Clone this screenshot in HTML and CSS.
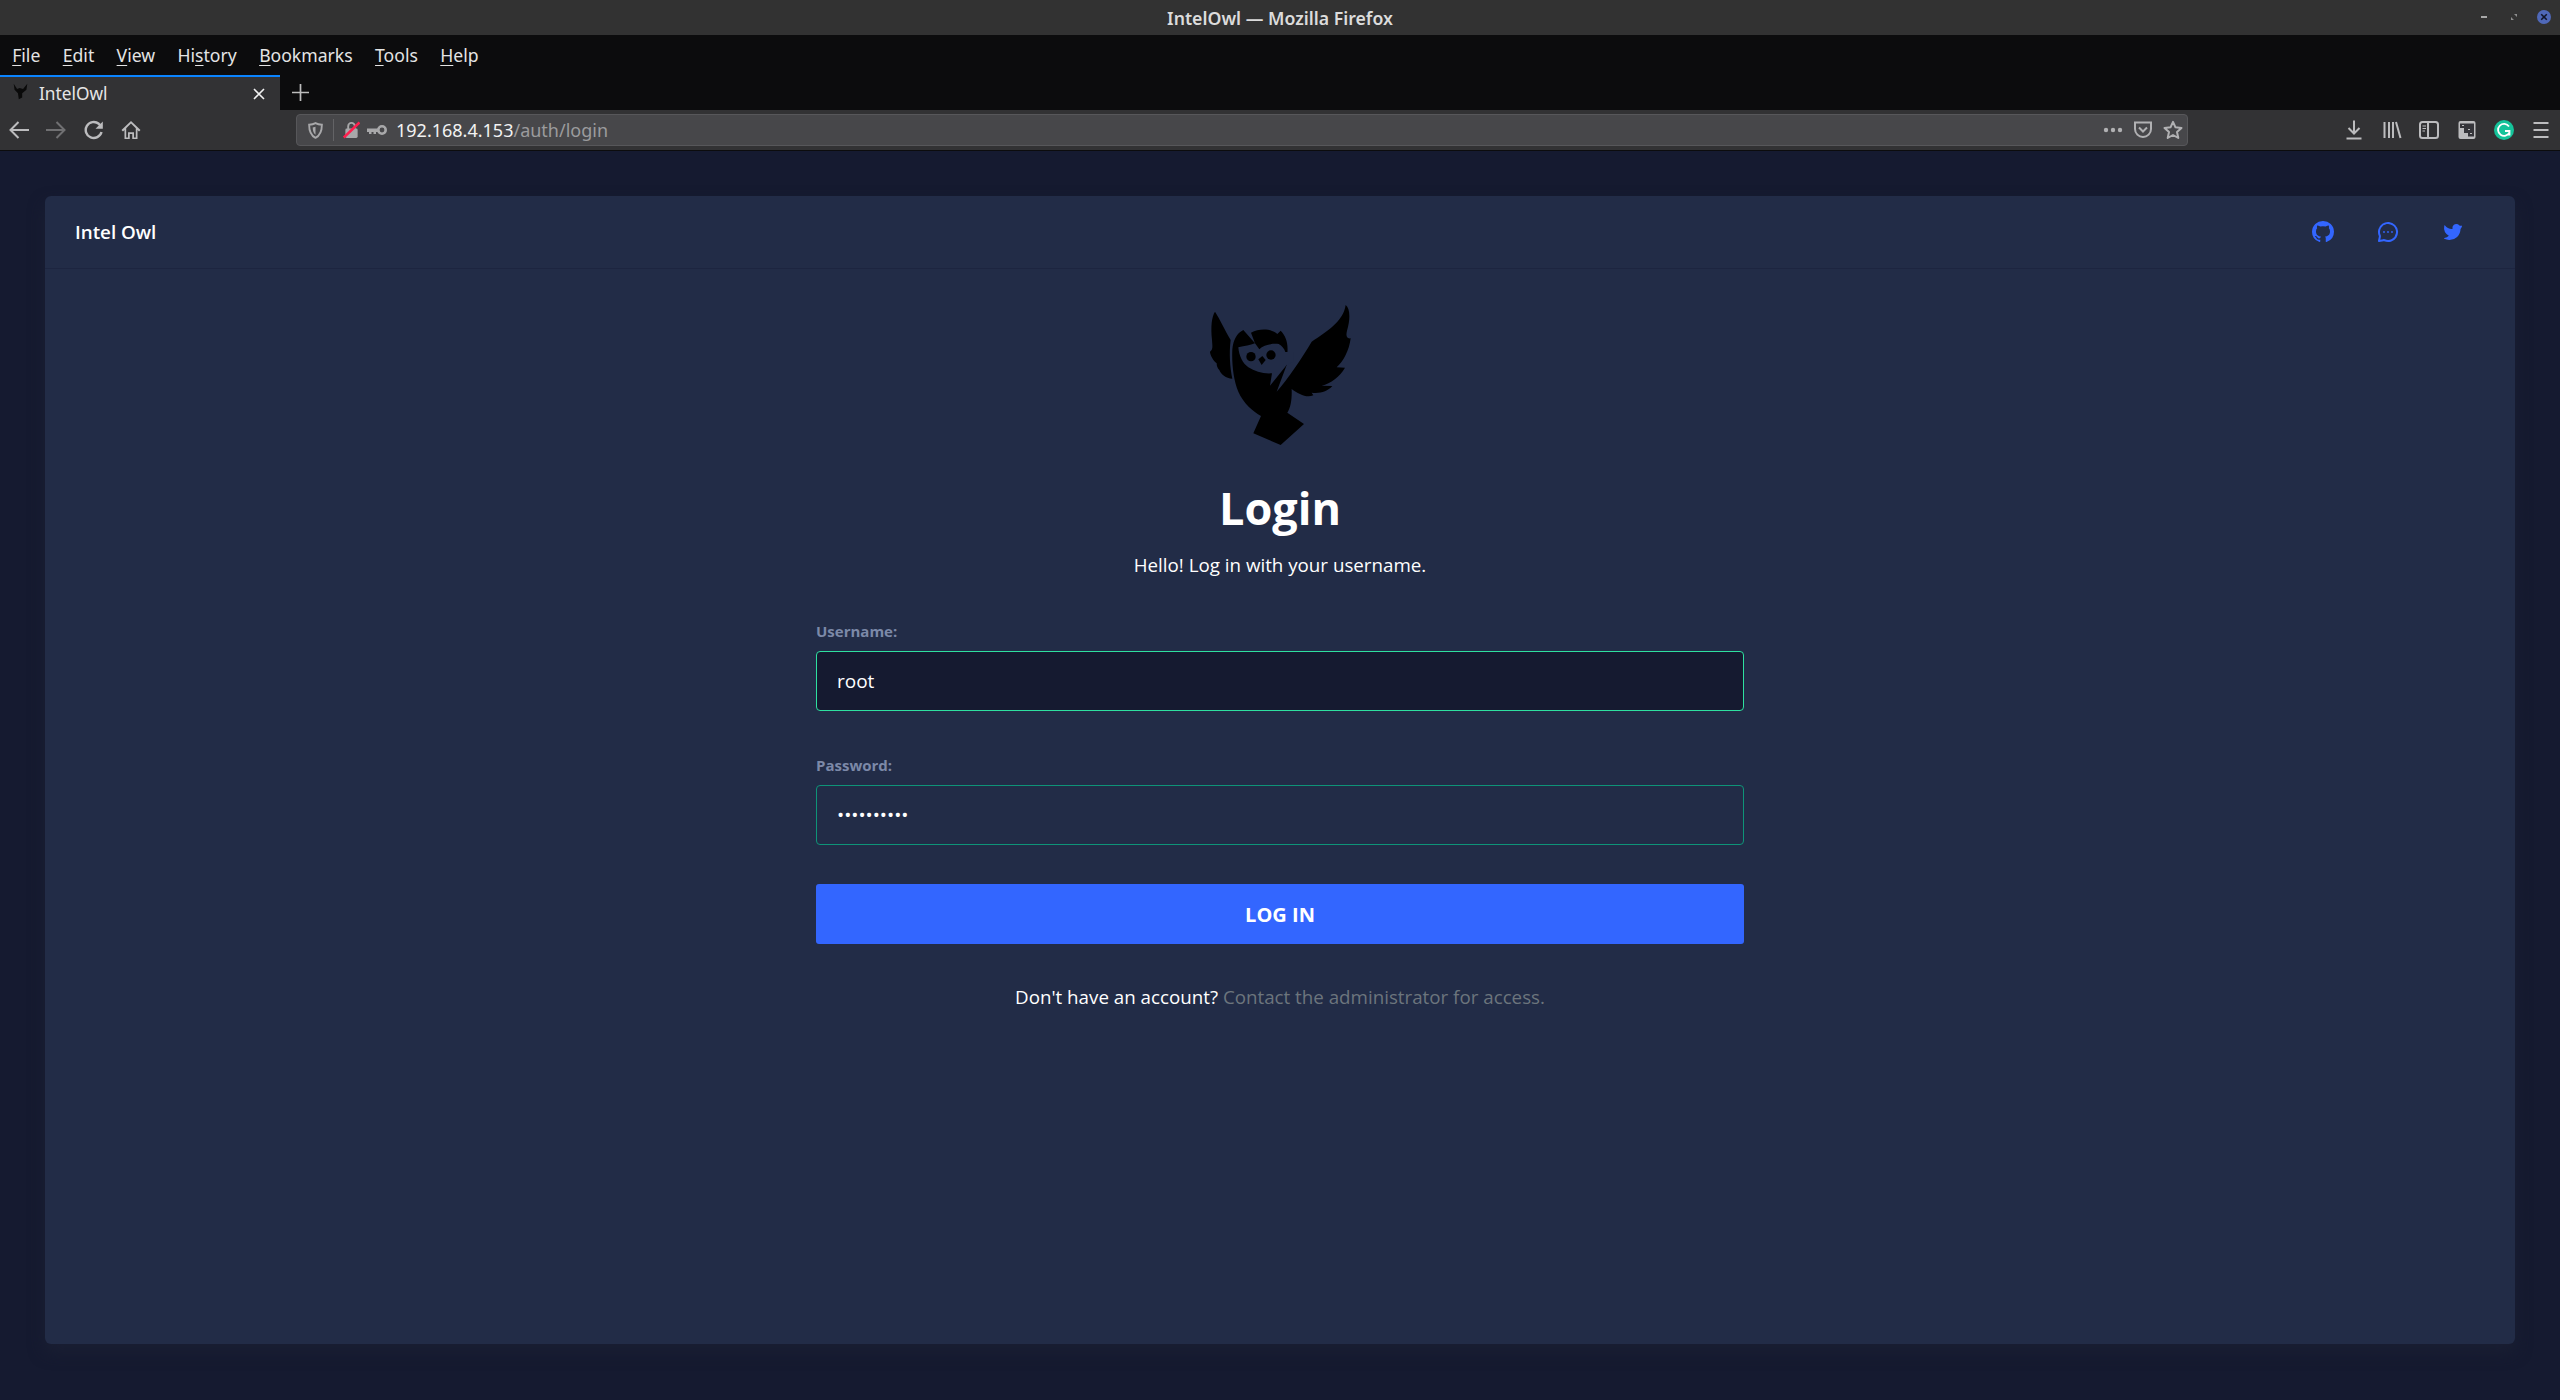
FILE: index.html
```html
<!DOCTYPE html>
<html lang="en">
<head>
<meta charset="utf-8">
<title>IntelOwl</title>
<link rel="stylesheet" href="styles.css">
</head>
<body>
<svg class="defs" width="0" height="0" aria-hidden="true">
  <defs>
    <symbol id="owl" viewBox="0 0 600 510">
      <path fill="#000" d="M105 65C95 80 92 110 96 150C97 168 100 178 90 185C90 195 100 212 110 220C110 228 112 234 118 240C122 252 138 266 157 266C150 230 147 190 152 150C135 120 118 85 105 65Z"/>
      <path fill="#000" d="M190 120C170 130 160 150 157 178C155 220 160 270 175 305C190 340 220 365 243 378L220 430L302 465L372 402L322 368C333 352 336 325 335 297C355 312 380 325 400 316L395 308C420 311 442 305 457 288L425 287C452 280 480 260 495 233L470 232C490 215 508 180 512 145C498 147 498 135 501 122C512 85 510 55 497 45C490 95 440 125 395 155C365 205 325 265 290 305L320 225L322 190C325 160 318 138 302 122L292 132C275 116 240 113 213 128L225 160Z"/>
      <path fill="#222c47" d="M175 172C195 168 210 165 225 160L238 178C250 165 275 160 296 162C306 168 313 176 316 186L340 186L340 215L320 225L270 287L276 250C250 252 225 245 205 232C188 220 177 198 175 172Z"/>
      <circle cx="213" cy="200" r="14" fill="#000"/>
      <circle cx="273" cy="195" r="14" fill="#000"/>
      <path fill="#000" d="M247 198L257 210L245 225L235 208Z"/>
    </symbol>
    <symbol id="favowl" viewBox="0 0 20 20">
      <path fill="#0a0a0a" d="M2 1L6 7L9 6L13 7L18 1L17 8L12 12L12 17L8 19L7 12L3 8Z"/>
    </symbol>
  </defs>
</svg>

<header class="titlebar">
  <span class="title-text">IntelOwl — Mozilla Firefox</span>
  <div class="wm">
    <span class="wm-min"></span>
    <svg class="wm-max" viewBox="0 0 8 8"><path d="M4 0H8V4ZM0 4L4 8H0Z"/></svg>
    <svg class="wm-close" viewBox="0 0 14 14"><circle cx="7" cy="7" r="7" fill="#4f68b8"/><path d="M4.200 4.200L9.800 9.800M9.800 4.200L4.200 9.800" stroke="#12162a" stroke-width="1.600"/></svg>
  </div>
</header>

<nav class="menubar">
  <span class="menu-item"><u>F</u>ile</span>
  <span class="menu-item"><u>E</u>dit</span>
  <span class="menu-item"><u>V</u>iew</span>
  <span class="menu-item">Hi<u>s</u>tory</span>
  <span class="menu-item"><u>B</u>ookmarks</span>
  <span class="menu-item"><u>T</u>ools</span>
  <span class="menu-item"><u>H</u>elp</span>
</nav>

<div class="tabstrip">
  <div class="tab">
    <svg class="tab-fav"><use href="#favowl"/></svg>
    <span class="tab-title">IntelOwl</span>
    <svg class="tab-close" viewBox="0 0 12 12"><path d="M1 1L11 11M11 1L1 11" stroke="#f2f2f2" stroke-width="1.600"/></svg>
  </div>
  <svg class="tab-new" viewBox="0 0 16 16"><path d="M8 0V16M0 8H16" stroke="#bdbdbd" stroke-width="1.600"/></svg>
</div>

<div class="toolbar">
  <div class="navbtns">
    <span class="tbtn"><svg viewBox="0 0 20 20" class="ic"><path d="M20 10H1.500M9.500 2L1.500 10L9.500 18" class="st"/></svg></span>
    <span class="tbtn dim"><svg viewBox="0 0 20 20" class="ic"><path d="M0 10H18.500M10.500 2L18.500 10L10.500 18" class="st"/></svg></span>
    <span class="tbtn shift"><svg viewBox="0 0 20 20" class="ic"><path d="M17.500 12A8 8 0 1 1 14.800 3.800L17.500 6.500" class="st wide"/><path d="M18.800 1.500V8.800H11.500Z" class="fl"/></svg></span>
    <span class="tbtn"><svg viewBox="0 0 20 20" class="ic"><path d="M10 1L19.500 10L18 11.500L16.500 10V19H11.500V14H8.500V19H3.500V10L2 11.500L0.500 10Z" class="fl"/><path d="M10 3.500L14.800 8.200V17.500H13V12.500H7V17.500H5.200V8.200Z" fill="#323234"/><path d="M7 12.500H13V19H11.500V14H8.500V19H7Z" class="fl"/></svg></span>
  </div>
  <div class="urlbar">
    <svg class="u-shield" viewBox="0 0 16 18"><path d="M8 1.200C10 2.300 12.500 2.800 14.800 2.800C14.800 9 13.500 14 8 16.800C2.500 14 1.200 9 1.200 2.800C3.500 2.800 6 2.300 8 1.200Z" fill="none" stroke="#a8a8aa" stroke-width="2"/><path d="M8 5V13.500C5.500 12 5 8 5 5.800Z" fill="#a8a8aa"/></svg>
    <span class="u-sep"></span>
    <svg class="u-lock" viewBox="0 0 18 18"><path d="M5.500 8V5A3.500 3.500 0 0 1 12.500 5V8" fill="none" stroke="#a8a8aa" stroke-width="2"/><rect x="2.500" y="7.500" width="13" height="10" rx="1.500" fill="#a8a8aa"/><path d="M0.800 17L17.500 1" stroke="#ff1f4e" stroke-width="2.800"/></svg>
    <svg class="u-key" viewBox="0 0 20 10"><circle cx="15" cy="5" r="3.700" fill="none" stroke="#a8a8aa" stroke-width="2.600"/><path d="M12 3.500H0V7H2V9H4.500V7H6.500V9H9V7H12Z" fill="#a8a8aa"/></svg>
    <span class="u-text"><span class="u-host">192.168.4.153</span><span class="u-path">/auth/login</span></span>
    <span class="u-right">
      <svg class="u-dots" viewBox="0 0 20 6"><circle cx="3" cy="3" r="2.200"/><circle cx="10" cy="3" r="2.200"/><circle cx="17" cy="3" r="2.200"/></svg>
      <svg class="u-pocket" viewBox="0 0 20 18"><path d="M2 1.500H18V8A8 8 0 0 1 2 8Z" fill="none" stroke="#b1b1b3" stroke-width="2"/><path d="M6 6.500L10 10.500L14 6.500" fill="none" stroke="#b1b1b3" stroke-width="2"/></svg>
      <svg class="u-star" viewBox="0 0 20 20"><path d="M10 1.800L12.500 7.300L18.500 8L14 12L15.300 18L10 15L4.700 18L6 12L1.500 8L7.500 7.300Z" fill="none" stroke="#b1b1b3" stroke-width="2" stroke-linejoin="round"/></svg>
    </span>
  </div>
  <div class="tools">
    <span class="tbtn"><svg viewBox="0 0 20 20" class="ic"><path d="M10 0.500V13M4.500 8L10 13.500L15.500 8M2.500 18.500H17.500" class="st"/></svg></span>
    <span class="tbtn"><svg viewBox="0 0 20 20" class="ic"><path d="M2.500 2V18M7 2V18M11 2V18M14 2L18.500 18" class="st"/></svg></span>
    <span class="tbtn"><svg viewBox="0 0 20 20" class="ic"><rect x="1" y="2" width="18" height="16" rx="2.500" class="st"/><path d="M9 3V17" class="st"/><path d="M3.500 6H7M3.500 8.500H7M3.500 11H6" class="thin"/></svg></span>
    <span class="tbtn"><svg viewBox="0 0 20 20" class="ic"><rect x="1.500" y="1" width="17" height="18" rx="2" class="fl"/><path d="M3 3.500H17V16.500H11V13H7V8H3Z" fill="#35353a"/><path d="M5 5.500H7M11 9.500H13M13 13.500H15" class="thin"/></svg></span>
    <span class="tbtn"><svg viewBox="0 0 20 20" class="gram"><circle cx="10" cy="10" r="10" fill="#15c39a"/><path d="M15 6.500A6 6 0 1 0 15.500 12.500M11 11H15.500V15.500" fill="none" stroke="#fff" stroke-width="1.800"/></svg></span>
    <span class="tbtn"><svg viewBox="0 0 20 20" class="ic"><path d="M2.500 3H17.500M2.500 10H17.500M2.500 17H17.500" class="st"/></svg></span>
  </div>
</div>

<main class="page">
  <section class="card">
    <header class="card-head">
      <span class="brand">Intel Owl</span>
      <div class="socials">
        <svg class="social" viewBox="0 0 24 24"><path d="M12 1A10.890 10.890 0 0 0 1 11.770 10.790 10.790 0 0 0 8.520 22c.55.1.75-.23.75-.52v-1.830c-3.060.65-3.710-1.440-3.710-1.440a2.860 2.860 0 0 0-1.220-1.580c-1-.66.08-.65.08-.65a2.310 2.310 0 0 1 1.680 1.110 2.370 2.370 0 0 0 3.200.89 2.330 2.330 0 0 1 .7-1.440c-2.440-.27-5-1.190-5-5.320a4.150 4.150 0 0 1 1.110-2.910 3.780 3.780 0 0 1 .11-2.840s.93-.29 3 1.100a10.680 10.680 0 0 1 5.500 0c2.100-1.390 3-1.100 3-1.100a3.780 3.780 0 0 1 .11 2.840A4.150 4.150 0 0 1 19 11.200c0 4.140-2.580 5.050-5 5.320a2.500 2.500 0 0 1 .75 2v2.950c0 .35.2.63.75.52A10.800 10.800 0 0 0 23 11.770 10.890 10.890 0 0 0 12 1"/></svg>
        <svg class="social" viewBox="0 0 24 24"><circle cx="12" cy="12" r=".9"/><circle cx="16" cy="12" r=".9"/><circle cx="8" cy="12" r=".9"/><path d="M19.070 4.930a10 10 0 0 0-16.280 11 1.060 1.060 0 0 1 .09.64L2 20.800a1 1 0 0 0 .27.91A1 1 0 0 0 3 22h.2l4.280-.86a1.260 1.260 0 0 1 .64.09 10 10 0 0 0 11-16.280zm.83 8.360a8 8 0 0 1-11 6.080 3.260 3.260 0 0 0-1.250-.26 3.430 3.430 0 0 0-.56.05l-2.820.57.57-2.820a3.090 3.090 0 0 0-.21-1.810 8 8 0 0 1 6.080-11 8 8 0 0 1 9.190 9.190z"/></svg>
        <svg class="social" viewBox="0 0 24 24"><path d="M8.080 20A11.070 11.070 0 0 0 19.520 9 8.090 8.090 0 0 0 21 6.160a.44.44 0 0 0-.62-.51 1.880 1.880 0 0 1-2.160-.38 3.890 3.890 0 0 0-5.580-.17A4.130 4.130 0 0 0 11.490 9C8.140 9.200 5.840 7.610 4 5.430a.43.43 0 0 0-.75.24 9.680 9.680 0 0 0 4.600 10.050A6.730 6.730 0 0 1 3.380 18a.45.45 0 0 0-.14.84A11 11 0 0 0 8.080 20"/></svg>
      </div>
    </header>
    <div class="card-body">
      <svg class="logo"><use href="#owl"/></svg>
      <h1 class="heading">Login</h1>
      <p class="sub">Hello! Log in with your username.</p>
      <form class="form">
        <label class="label" for="u">Username:</label>
        <input id="u" class="input input-focus" type="text" value="root">
        <label class="label label-2" for="p">Password:</label>
        <input id="p" class="input input-pass" type="password" value="password12">
        <button class="submit" type="button">LOG IN</button>
      </form>
      <p class="foot">Don't have an account? <span class="foot-link">Contact the administrator for access.</span></p>
    </div>
  </section>
</main>
</body>
</html>
```
FILE: styles.css
```css
* { box-sizing: border-box; }
html, body { margin: 0; padding: 0; height: 100%; }
body {
  width: 2560px;
  height: 1400px;
  overflow: hidden;
  display: flex;
  flex-direction: column;
  background: #151a30;
  font-family: "Noto Sans", sans-serif;
}
.defs { display: block; height: 0; }

.titlebar {
  height: 35px;
  flex: none;
  display: flex;
  align-items: center;
  justify-content: center;
  background: #323232;
  position: relative;
}
.title-text { color: #dcdcdc; font-size: 17.7px; font-weight: 600; }
.wm { position: absolute; right: 9px; top: 10px; display: flex; align-items: center; height: 14px; }
.wm-min { width: 6px; height: 2px; background: #a8a8a8; margin-right: 24px; }
.wm-max { width: 6px; height: 6px; fill: #8c8c8c; margin-right: 20px; }
.wm-close { width: 14px; height: 14px; }

.menubar {
  height: 40px;
  flex: none;
  display: flex;
  align-items: center;
  background: #0c0c0d;
  padding-left: 1px;
}
.menu-item { color: #e4e4e4; font-size: 17.6px; padding: 0 11.2px; white-space: nowrap; }
.menu-item u { text-underline-offset: 3px; text-decoration-thickness: 1px; }

.tabstrip {
  height: 35px;
  flex: none;
  display: flex;
  align-items: center;
  background: #0c0c0d;
}
.tab {
  width: 280px;
  height: 35px;
  display: flex;
  align-items: center;
  background: #323234;
  border-top: 2px solid #0a84ff;
  padding-left: 12px;
}
.tab-fav { width: 17px; height: 17px; margin-top: -4px; }
.tab-title { color: #e6e6e6; font-size: 17.3px; margin-left: 10px; flex: 1; }
.tab-close { width: 12px; height: 12px; margin-right: 15px; }
.tab-new { width: 17px; height: 17px; margin-left: 12px; }

.toolbar {
  height: 41px;
  flex: none;
  display: flex;
  align-items: center;
  background: #323234;
  border-bottom: 1px solid #0c0c0d;
}
.navbtns { display: flex; width: 296px; flex: none; }
.tbtn { width: 37.4px; display: flex; justify-content: center; align-items: center; flex: none; }
.tbtn.dim { opacity: .45; }
.tbtn.shift { padding-left: 2px; }
.ic { width: 20px; height: 20px; }
.gram { width: 20px; height: 20px; }
.st { fill: none; stroke: #bcbcbe; stroke-width: 2; }
.st.wide { stroke-width: 2.4; }
.fl { fill: #bcbcbe; }
.thin { fill: none; stroke: #bcbcbe; stroke-width: 1.2; }

.urlbar {
  width: 1892px;
  height: 32px;
  flex: none;
  display: flex;
  align-items: center;
  background: #47474a;
  border: 1px solid #57575a;
  border-radius: 4px;
  padding-left: 11px;
}
.u-shield { width: 15px; height: 17px; }
.u-sep { width: 1px; height: 22px; background: #636366; margin-left: 10px; }
.u-lock { width: 17px; height: 18px; margin-left: 9px; }
.u-key { width: 20px; height: 10px; margin-left: 7px; }
.u-text { font-size: 18px; margin-left: 9px; white-space: nowrap; }
.u-host { color: #f2f2f2; }
.u-path { color: #9b9b9d; }
.u-right { margin-left: auto; display: flex; align-items: center; margin-right: 4px; }
.u-dots { width: 20px; height: 6px; fill: #b1b1b3; }
.u-pocket { width: 20px; height: 18px; margin-left: 10px; }
.u-star { width: 20px; height: 20px; margin-left: 10px; }
.tools { display: flex; margin-left: auto; margin-right: 0; }

.page { flex: 1; padding: 45px 45px 56px; min-height: 0; }
.card {
  height: 100%;
  background: #222c47;
  border-radius: 6px;
  display: flex;
  flex-direction: column;
  box-shadow: 0 8px 16px #1a1f33;
}
.card-head {
  height: 73px;
  flex: none;
  display: flex;
  align-items: center;
  justify-content: space-between;
  border-bottom: 1px solid #1d2540;
  padding: 0 50px 0 30px;
}
.brand { color: #fff; font: 600 18.8px "Open Sans", sans-serif; }
.socials { display: flex; gap: 41px; }
.social { width: 24px; height: 24px; fill: #3366ff; }

.card-body {
  display: flex;
  flex-direction: column;
  align-items: center;
  font-family: "Open Sans", sans-serif;
}
.logo { width: 200px; height: 170px; margin-top: 21px; display: block; }
.heading { margin: 20px 0 0; height: 56px; line-height: 56px; font-size: 45px; font-weight: 700; color: #fff; }
.sub { margin: 15px 0 0; color: #fff; font-size: 18.75px; line-height: 28px; }
.form { width: 928px; display: flex; flex-direction: column; margin-top: 42px; }
.label { color: #7c89a8; font-size: 15px; font-weight: 700; line-height: 20px; margin-bottom: 10px; }
.label-2 { margin-top: 44px; }
.input {
  height: 60px;
  border-radius: 4px;
  padding: 0 20px;
  color: #fff;
  font: 500 19px "Open Sans", sans-serif;
  outline: none;
}
.input-focus { background: #151a30; border: 1px solid #2ee0a0; }
.input-pass { background: #222c47; border: 1px solid #0e9478; }
.submit {
  height: 60px;
  margin-top: 39px;
  background: #3366ff;
  border: 0;
  border-radius: 3px;
  color: #fff;
  font: 700 20px "Open Sans", sans-serif;
}
.foot { margin: 39px 0 0; color: #fff; font-size: 18.75px; line-height: 28px; }
.foot-link { color: #6c757d; }
```
